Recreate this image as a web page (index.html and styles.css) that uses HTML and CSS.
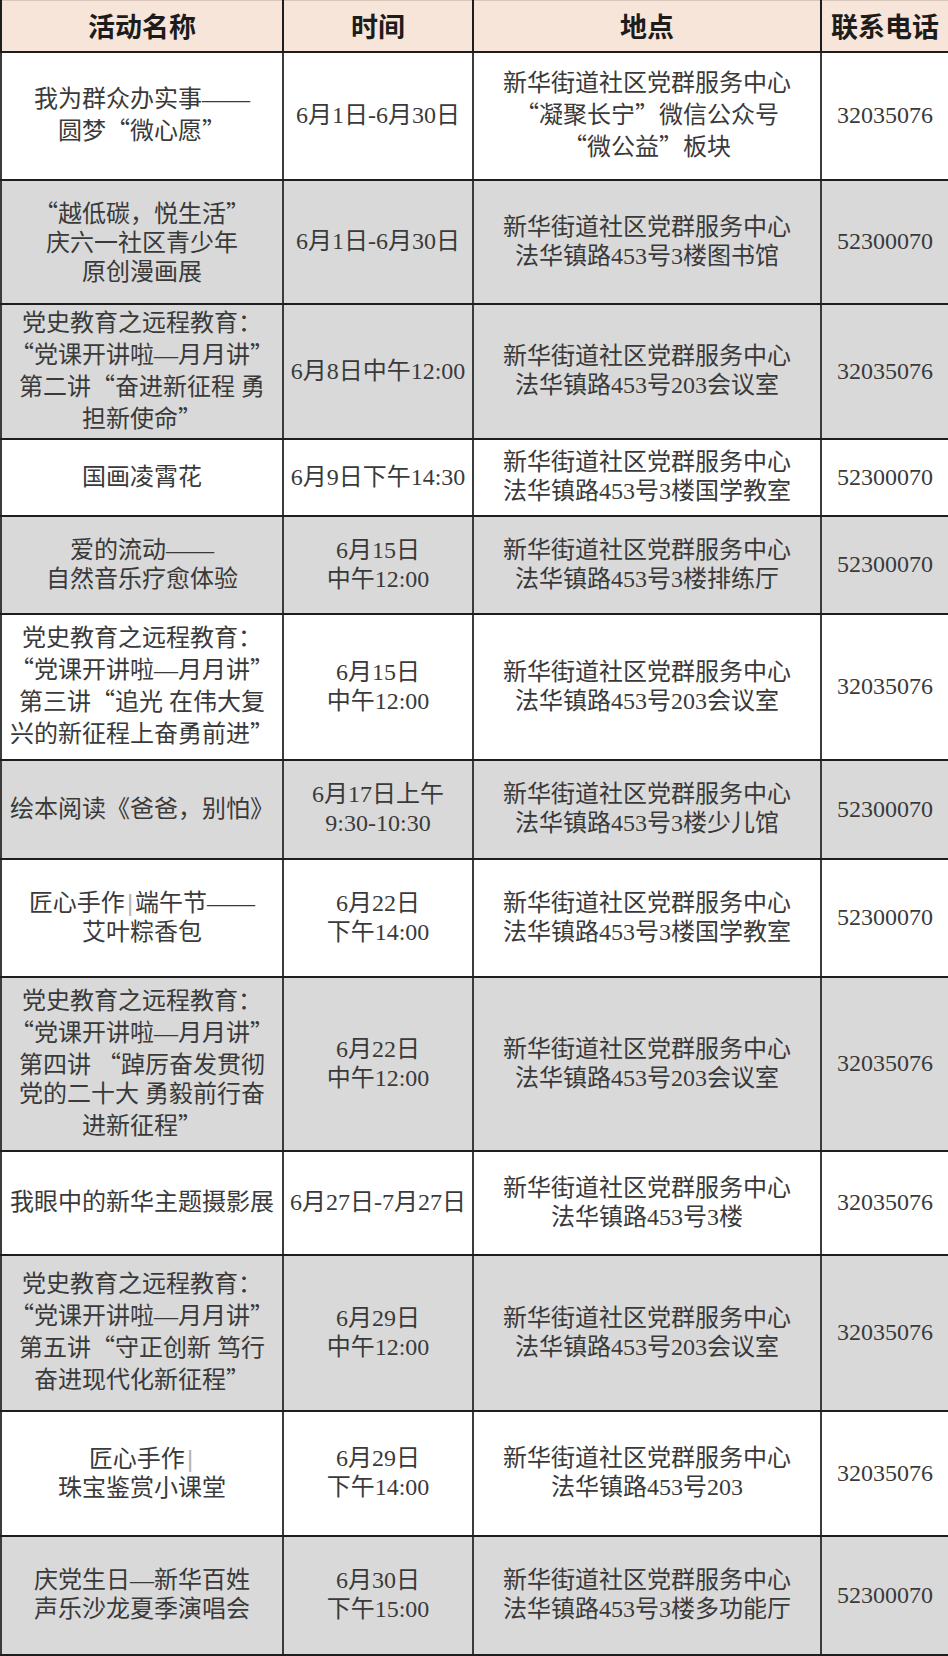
FILE: index.html
```html
<!DOCTYPE html>
<html lang="zh-CN">
<head>
<meta charset="utf-8">
<title>活动安排</title>
<link rel="stylesheet" href="styles.css">
</head>
<body>
<table class="sched">
  <colgroup>
    <col class="c-name"><col class="c-time"><col class="c-place"><col class="c-tel">
  </colgroup>
  <thead>
    <tr class="head"><th>活动名称</th><th>时间</th><th>地点</th><th>联系电话</th></tr>
  </thead>
  <tbody>
    <tr class="r1 white">
      <td>我为群众办实事——<br>圆梦<span class="q">“</span>微心愿<span class="q">”</span></td>
      <td>6月1日-6月30日</td>
      <td>新华街道社区党群服务中心<br><span class="q">“</span>凝聚长宁<span class="q">”</span>微信公众号<br><span class="q">“</span>微公益<span class="q">”</span>板块</td>
      <td>32035076</td>
    </tr>
    <tr class="r2 gray">
      <td><span class="q">“</span>越低碳，悦生活<span class="q">”</span><br>庆六一社区青少年<br>原创漫画展</td>
      <td>6月1日-6月30日</td>
      <td>新华街道社区党群服务中心<br>法华镇路453号3楼图书馆</td>
      <td>52300070</td>
    </tr>
    <tr class="r3 gray">
      <td>党史教育之远程教育：<br><span class="q">“</span>党课开讲啦—月月讲<span class="q">”</span><br>第二讲<span class="q">“</span>奋进新征程 勇<br>担新使命<span class="q">”</span></td>
      <td>6月8日中午12:00</td>
      <td>新华街道社区党群服务中心<br>法华镇路453号203会议室</td>
      <td>32035076</td>
    </tr>
    <tr class="r4 white">
      <td>国画凌霄花</td>
      <td>6月9日下午14:30</td>
      <td>新华街道社区党群服务中心<br>法华镇路453号3楼国学教室</td>
      <td>52300070</td>
    </tr>
    <tr class="r5 gray">
      <td>爱的流动——<br>自然音乐疗愈体验</td>
      <td>6月15日<br>中午12:00</td>
      <td>新华街道社区党群服务中心<br>法华镇路453号3楼排练厅</td>
      <td>52300070</td>
    </tr>
    <tr class="r6 white">
      <td>党史教育之远程教育：<br><span class="q">“</span>党课开讲啦—月月讲<span class="q">”</span><br>第三讲<span class="q">“</span>追光 在伟大复<br>兴的新征程上奋勇前进<span class="q">”</span></td>
      <td>6月15日<br>中午12:00</td>
      <td>新华街道社区党群服务中心<br>法华镇路453号203会议室</td>
      <td>32035076</td>
    </tr>
    <tr class="r7 gray">
      <td>绘本阅读《爸爸，别怕》</td>
      <td>6月17日上午<br>9:30-10:30</td>
      <td>新华街道社区党群服务中心<br>法华镇路453号3楼少儿馆</td>
      <td>52300070</td>
    </tr>
    <tr class="r8 white">
      <td>匠心手作<span class="bar">|</span>端午节——<br>艾叶粽香包</td>
      <td>6月22日<br>下午14:00</td>
      <td>新华街道社区党群服务中心<br>法华镇路453号3楼国学教室</td>
      <td>52300070</td>
    </tr>
    <tr class="r9 gray">
      <td>党史教育之远程教育：<br><span class="q">“</span>党课开讲啦—月月讲<span class="q">”</span><br>第四讲 <span class="q">“</span>踔厉奋发贯彻<br>党的二十大 勇毅前行奋<br>进新征程<span class="q">”</span></td>
      <td>6月22日<br>中午12:00</td>
      <td>新华街道社区党群服务中心<br>法华镇路453号203会议室</td>
      <td>32035076</td>
    </tr>
    <tr class="r10 white">
      <td>我眼中的新华主题摄影展</td>
      <td>6月27日-7月27日</td>
      <td>新华街道社区党群服务中心<br>法华镇路453号3楼</td>
      <td>32035076</td>
    </tr>
    <tr class="r11 gray">
      <td>党史教育之远程教育：<br><span class="q">“</span>党课开讲啦—月月讲<span class="q">”</span><br>第五讲<span class="q">“</span>守正创新 笃行<br>奋进现代化新征程<span class="q">”</span></td>
      <td>6月29日<br>中午12:00</td>
      <td>新华街道社区党群服务中心<br>法华镇路453号203会议室</td>
      <td>32035076</td>
    </tr>
    <tr class="r12 white">
      <td>匠心手作<span class="bar">|</span><br>珠宝鉴赏小课堂</td>
      <td>6月29日<br>下午14:00</td>
      <td>新华街道社区党群服务中心<br>法华镇路453号203</td>
      <td>32035076</td>
    </tr>
    <tr class="r13 gray">
      <td>庆党生日—新华百姓<br>声乐沙龙夏季演唱会</td>
      <td>6月30日<br>下午15:00</td>
      <td>新华街道社区党群服务中心<br>法华镇路453号3楼多功能厅</td>
      <td>52300070</td>
    </tr>
  </tbody>
</table>
</body>
</html>
```

FILE: styles.css
```css
html, body {
  margin: 0;
  padding: 0;
  background: #ffffff;
}

.sched {
  width: 948px;
  table-layout: fixed;
  border-collapse: collapse;
  font-family: "Liberation Serif", "Noto Sans CJK SC", serif;
  font-size: 24px;
  line-height: 29px;
  color: #3a3a3a;
}

.c-name { width: 282px; }
.c-time { width: 190px; }
.c-place { width: 348px; }
.c-tel { width: 128px; }

.sched th,
.sched td {
  border: 2px solid #1e1e1e;
  text-align: center;
  vertical-align: middle;
  padding: 0;
  white-space: nowrap;
  overflow: hidden;
}

.sched td {
  font-weight: 400;
  border-left-color: #3c3c3c;
  border-right-color: #3c3c3c;
}

.sched thead th {
  border-top: 1px solid #d9c6ba;
}

.head {
  height: 51px;
  background: #f8e5d9;
}

.head th {
  font-family: "Noto Sans CJK SC", serif;
  font-size: 27px;
  font-weight: 700;
  color: #1c1c1c;
  letter-spacing: 0;
}

.white { background: #ffffff; }
.gray { background: #d9d9d9; }

.q {
  font-family: "Noto Sans CJK SC", sans-serif;
  font-feature-settings: "fwid" 1;
}

.bar {
  color: #b5b5b5;
  font-family: "Liberation Sans", sans-serif;
  padding: 0 2px;
}

.r1 { height: 128px; }
.r2 { height: 124px; }
.r3 { height: 135px; }
.r4 { height: 77px; }
.r5 { height: 98px; }
.r6 { height: 146px; }
.r7 { height: 99px; }
.r8 { height: 118px; }
.r9 { height: 174px; }
.r10 { height: 104px; }
.r11 { height: 156px; }
.r12 { height: 125px; }
.r13 { height: 119px; }
```
